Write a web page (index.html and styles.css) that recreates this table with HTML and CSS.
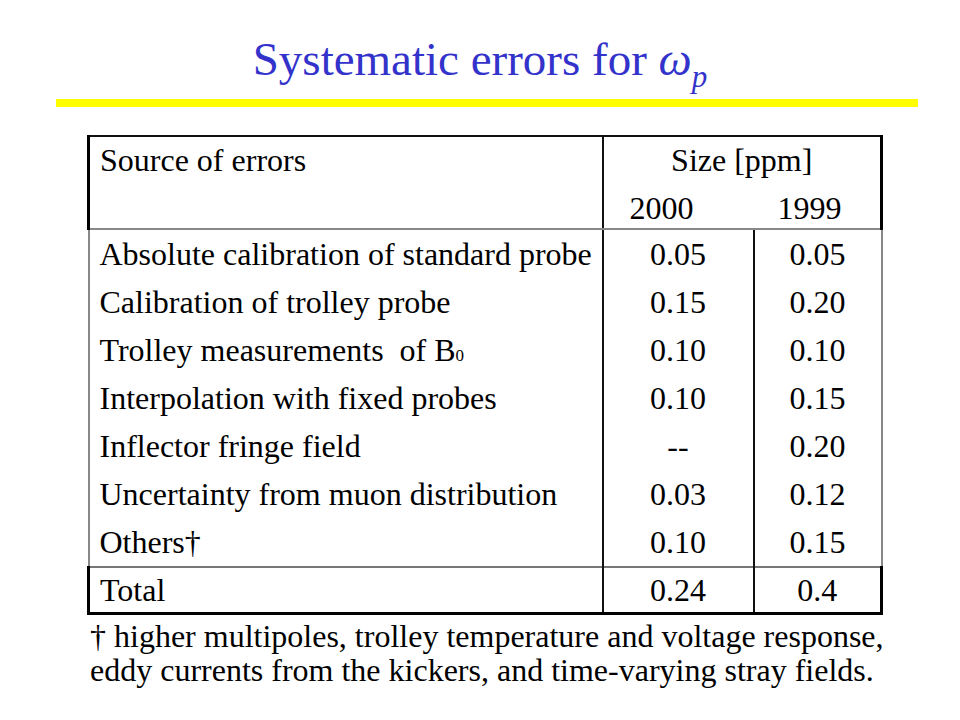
FILE: index.html
```html
<!DOCTYPE html>
<html>
<head>
<meta charset="utf-8">
<link rel="stylesheet" href="styles.css">
</head>
<body>
<div class="slide">
  <h1 class="title">Systematic errors for <span class="omega">ω<sub>p</sub></span></h1>
  <div class="rule"></div>
  <table class="errors">
    <colgroup>
      <col class="c-src">
      <col class="c-a">
      <col class="c-b">
    </colgroup>
    <tbody>
      <tr class="head1">
        <td class="src h-src" rowspan="2">Source of errors</td>
        <td class="h-size" colspan="2">Size [ppm]</td>
      </tr>
      <tr class="head2">
        <td class="h-year y2000">2000</td>
        <td class="h-year y1999">1999</td>
      </tr>
      <tr class="body first">
        <td class="src">Absolute calibration of standard probe</td>
        <td class="num a">0.05</td>
        <td class="num b">0.05</td>
      </tr>
      <tr class="body">
        <td class="src">Calibration of trolley probe</td>
        <td class="num a">0.15</td>
        <td class="num b">0.20</td>
      </tr>
      <tr class="body">
        <td class="src">Trolley measurements&nbsp; of B<span class="sub0">0</span></td>
        <td class="num a">0.10</td>
        <td class="num b">0.10</td>
      </tr>
      <tr class="body">
        <td class="src">Interpolation with fixed probes</td>
        <td class="num a">0.10</td>
        <td class="num b">0.15</td>
      </tr>
      <tr class="body">
        <td class="src">Inflector fringe field</td>
        <td class="num a">--</td>
        <td class="num b">0.20</td>
      </tr>
      <tr class="body">
        <td class="src">Uncertainty from muon distribution</td>
        <td class="num a">0.03</td>
        <td class="num b">0.12</td>
      </tr>
      <tr class="body last">
        <td class="src">Others†</td>
        <td class="num a">0.10</td>
        <td class="num b">0.15</td>
      </tr>
      <tr class="total">
        <td class="src">Total</td>
        <td class="num a">0.24</td>
        <td class="num b">0.4</td>
      </tr>
    </tbody>
  </table>
  <p class="note">† higher multipoles, trolley temperature and voltage response,<br>eddy currents from the kickers, and time-varying stray fields.</p>
</div>
</body>
</html>
```
FILE: styles.css
```css
html, body {
  margin: 0;
  padding: 0;
  background: #ffffff;
}

.slide {
  width: 960px;
  height: 720px;
  font-family: "Liberation Serif", "Times New Roman", serif;
  color: #000000;
  overflow: hidden;
}

.title {
  margin: 0;
  padding-top: 33px;
  height: 66px;
  box-sizing: border-box;
  text-align: center;
  font-weight: normal;
  font-size: 47px;
  line-height: 52px;
  color: #3333cc;
  white-space: nowrap;
}

.omega {
  font-style: italic;
}

.omega sub {
  font-size: 31px;
  vertical-align: -12px;
  line-height: 0;
}

.rule {
  margin-left: 56px;
  width: 862px;
  height: 8px;
  margin-top: 33px;
  background: #ffff00;
}

.errors {
  margin-top: 28px;
  margin-left: 87px;
  width: 793px;
  border-collapse: collapse;
  table-layout: fixed;
  font-size: 32px;
}

.c-src { width: 514px; }
.c-a { width: 151px; }
.c-b { width: 128px; }

.errors td {
  padding: 0;
  height: 48px;
  line-height: 46px;
  white-space: nowrap;
  overflow: hidden;
}

.src {
  padding-left: 10px !important;
  text-align: left;
}

.num {
  text-align: center;
}

/* header */
.h-src {
  vertical-align: top;
  border-top: 2px solid #111;
  border-left: 3px solid #000;
  border-right: 2px solid #111;
  border-bottom: 2px solid #888;
}

.head1 td {
  height: 46px;
  line-height: 46px;
}

.head2 td {
  height: 40px;
  line-height: 40px;
  padding-top: 5px;
}

.h-size {
  text-align: center;
  border-top: 2px solid #111;
  border-right: 3px solid #000;
}

.h-year {
  border-bottom: 2px solid #888;
}

.y2000 {
  text-align: left;
  padding-left: 26px !important;
}

.y1999 {
  text-align: left;
  padding-left: 24px !important;
  border-right: 3px solid #000;
}

/* body rows */
.body .src {
  border-left: 2px solid #888;
  border-right: 2px solid #111;
}

.body .a {
  border-right: 2px solid #111;
}

.body .b {
  border-right: 2px solid #888;
}

.sub0 {
  font-size: 17px;
  line-height: 0;
}

/* total */
.total td {
  height: 44px;
  line-height: 44px;
  border-top: 2px solid #777;
  border-bottom: 3px solid #000;
}

.total .src {
  border-left: 3px solid #000;
  border-right: 2px solid #111;
}

.total .a {
  border-right: 2px solid #111;
}

.total .b {
  border-right: 3px solid #000;
}

.note {
  margin: 4px 0 0 90px;
  font-size: 32px;
  line-height: 34px;
  white-space: nowrap;
}
```
